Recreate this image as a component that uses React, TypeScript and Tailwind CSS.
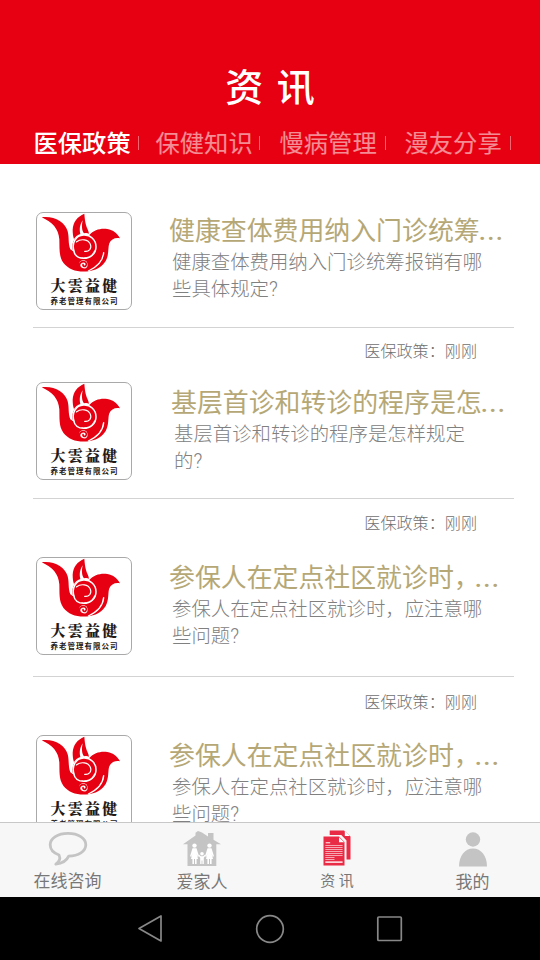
const tabs = [
  { label: "医保政策", cls: "w-[105px] font-medium text-white" },
  { label: "保健知识", cls: "ml-[17px] w-[104px] text-white/55" },
  { label: "慢病管理", cls: "ml-[20px] w-[106px] text-white/55" },
  { label: "漫友分享", cls: "ml-[19px] w-[106px] text-white/55" },
];

const items = [
  {
    title: "健康查体费用纳入门诊统筹",
    lines: ["健康查体费用纳入门诊统筹报销有哪", "些具体规定?"],
    row: "h-[115px]",
    text: "ml-[38px] pt-[2px]",
    foot: "h-[55px] pt-[12px]",
    dots: "-ml-px",
  },
  {
    title: "基层首诊和转诊的程序是怎",
    lines: ["基层首诊和转诊的程序是怎样规定", "的?"],
    row: "h-[116px]",
    text: "ml-[40px] pt-[4px]",
    foot: "h-[59px] pt-[13px]",
    dots: "-ml-px",
  },
  {
    title: "参保人在定点社区就诊时，",
    lines: ["参保人在定点社区就诊时，应注意哪", "些问题?"],
    row: "h-[119px]",
    text: "ml-[38px] pt-[4px]",
    foot: "h-[59px] pt-[14px]",
    dots: "-ml-[5px]",
  },
  {
    title: "参保人在定点社区就诊时，",
    lines: ["参保人在定点社区就诊时，应注意哪", "些问题?"],
    row: "h-[119px]",
    text: "ml-[38px] pt-[4px]",
    foot: "h-[59px] pt-[14px]",
    dots: "-ml-[5px]",
  },
];

function Logo() {
  return (
    <div className="flex h-[98px] w-24 shrink-0 flex-col items-center rounded-[7px] border border-[#a9a9a9] bg-white">
      <svg viewBox="-9 3 282 180" className="h-[60px] w-[94px] shrink-0">
        <g fill="#e60012">
          <path d="M5 16C42 11 75 30 83 58C88 78 84 94 91 112L130 140L165 150L148 177C120 183 86 174 70 152C56 133 59 108 58 82C56 50 37 31 5 16Z" />
          <path d="M133 5C112 14 99 30 98 53C98 64 99 72 102 81C107 73 114 69 121 66C118 51 119 40 128 25C124 44 126 56 132 64C138 62 143 63 147 65C146 56 140 48 138 39C135 27 134 17 133 5Z" />
          <path d="M147 70C162 53 183 48 202 51C220 54 232 64 240 79C225 76 213 82 208 94C203 107 208 128 197 147C187 164 165 177 142 178L118 150L165 120Z" />
          <circle cx="131" cy="103" r="34" />
        </g>
        <g fill="none" stroke="#fff" strokeLinecap="round">
          <path d="M103 120C93 94 107 70 131 69C152 68 168 84 168 104C168 125 151 139 131 139C115 139 104 130 101 116" strokeWidth="4.5" />
          <path d="M109 90C123 79 145 82 151 97C156 110 147 120 134 118" strokeWidth="3.5" />
          <path d="M191 122C189 146 171 165 145 177" strokeWidth="4" />
        </g>
        <circle cx="130" cy="158" r="13" fill="#fff" />
        <path d="M146 170C139 174 127 173 121 167C115 159 120 149 130 149C138 149 142 157 137 162C133 165 128 162 129 158" fill="none" stroke="#e60012" strokeWidth="5" strokeLinecap="round" />
      </svg>
      <div className="mt-[3px] h-[21px] whitespace-nowrap pl-[2px] font-['Liberation_Serif','Noto_Serif_CJK_SC','Noto_Sans_CJK_SC',serif] text-[15px] font-black leading-[20px] tracking-[2.2px] text-[#231815]">大雲益健</div>
      <div className="whitespace-nowrap pl-px text-[7.5px] font-bold leading-[9px] tracking-[1px] text-[#231815]">养老管理有限公司</div>
    </div>
  );
}

function ChatIcon() {
  return (
    <svg viewBox="0 0 40 36" className="h-9 w-10">
      <path d="M20 2.4C9.8 2.4 2.2 7.2 2.2 13.8C2.2 18.4 5.4 22 11 24C12.7 27.6 11 31 7.8 33.2C13.5 32.6 18.5 30 20.7 25.2C30.5 25 37.8 20.4 37.8 13.8C37.8 7.2 30.2 2.4 20 2.4Z" fill="none" stroke="#c4c4c4" strokeWidth="2.8" strokeLinejoin="round" />
    </svg>
  );
}

function FamilyIcon() {
  return (
    <svg viewBox="0 0 40 36" className="h-9 w-10">
      <path d="M16 0L20 1.6L26 5.6V2H31.5V8.7L39 13.3H34.3V35H5.5V13.3H1L13.5 4.5V1.8Z" fill="#c4c4c4" />
      <g fill="#fff">
        <circle cx="12.5" cy="14.6" r="2.2" />
        <path d="M10.5 17.2H14.5L17 25.2L15.7 25.7L14.5 22L16 28H14.6V33H13V28H12V33H10.4V28H9L10.5 22L9.3 25.7L8 25.2Z" />
        <circle cx="27.5" cy="14.6" r="2.2" />
        <path d="M25.5 17.2H29.5L32 25.2L30.7 25.7L29.5 22L31 28H29.6V33H28V28H27V33H25.4V28H24L25.5 22L24.3 25.7L23 25.2Z" />
        <circle cx="20" cy="22.7" r="1.8" />
        <path d="M16.8 23.4L18.9 25.2H21.1L23.2 23.4L23.7 24.4L21.8 26.7V33H20.4V29.5H19.6V33H18.2V26.7L16.3 24.4Z" />
      </g>
    </svg>
  );
}

function NewsIcon() {
  return (
    <svg viewBox="0 0 28 36" className="h-9 w-7">
      <path d="M6.7 .5H21L27.5 6.5V29.5H23.5V10.5L18.3 5H6.7Z" fill="#ea2b45" />
      <path d="M21.8 1V6H26.8Z" fill="#fff" />
      <path d="M.5 6.5H16L21.5 12V35.5H.5Z" fill="#ea2b45" />
      <path d="M16 7.2V12.3H21.2Z" fill="#fff" />
      <path d="M2.7 12.8H7.2" stroke="#fff" strokeWidth="1" />
      <path d="M2.3 15.5H19.6M2.3 17.5H19.6M2.3 19.5H19.6M2.3 21.5H19.6M2.3 23.5H19.6M2.3 25.5H19.6M2.3 27.5H11.5M2.3 29.5H11.5M2.3 31.5H19.6" stroke="#f7a5b0" strokeWidth="1.1" />
      <path d="M2.3 32.5H19.6" stroke="#fff" strokeWidth=".8" />
    </svg>
  );
}

function PersonIcon() {
  return (
    <svg viewBox="0 0 28 36" className="h-9 w-7" fill="#c4c4c4">
      <circle cx="14" cy="8.5" r="7.2" />
      <path d="M0 35.5C0 25 5.8 17.5 14 17.5S28 25 28 35.5Z" />
    </svg>
  );
}

export default function App() {
  return (
    <div className="flex h-[960px] w-[540px] flex-col overflow-hidden bg-white font-[Roboto,'Noto_Sans_CJK_SC',sans-serif]">
      <header className="h-[164px] shrink-0 bg-[#e60012]">
        <h1 className="pt-[62px] text-center text-[38px] font-medium leading-[52px] text-white [word-spacing:4px]">资 讯</h1>
        <nav className="mt-[13px] flex pl-[33.5px]">
          {tabs.map((t) => (
            <div key={t.label} className={`${t.cls} flex h-8 shrink-0 items-center justify-between whitespace-nowrap text-[24.3px]`}>
              <span className="pt-[2px]">{t.label}</span>
              <span className="h-[14px] w-px bg-white/40" />
            </div>
          ))}
        </nav>
      </header>

      <main className="min-h-0 flex-1 overflow-hidden pl-[33px] pr-[26px] pt-12">
        {items.map((it, i) => (
          <article key={i}>
            <div className={`${it.row} flex pl-[3px]`}>
              <Logo />
              <div className={`${it.text} whitespace-nowrap`}>
                <h2 className="-ml-px flex h-8 pt-px text-[25.9px] leading-8 text-[#b5a876]">
                  <span>{it.title}</span>
                  <span className={`${it.dots} font-medium tracking-[1.3px]`}>...</span>
                </h2>
                <p className="pl-[2px] pt-[3px] text-[19.4px] font-light leading-[27px] text-[#808080]">
                  {it.lines[0]}
                  <br />
                  {it.lines[1]}
                </p>
              </div>
            </div>
            <div className={`${it.foot} border-t border-[#d3d3d3] pr-[37px] text-right text-[16.1px] font-light leading-6 text-[#707070]`}>医保政策：刚刚</div>
          </article>
        ))}
      </main>

      <footer className="flex h-[75px] shrink-0 border-t border-[#c8c8c8] bg-[#f7f7f7] text-[17px] leading-6 text-[#777]">
        <div className="flex w-[135px] flex-col items-center pt-[8px]">
          <ChatIcon />
          <span className="mt-[2px]">在线咨询</span>
        </div>
        <div className="flex w-[134px] flex-col items-center pt-[8px]">
          <FamilyIcon />
          <span className="mt-[3px]">爱家人</span>
        </div>
        <div className="flex w-[136px] flex-col items-center pt-[7px]">
          <NewsIcon />
          <span className="mt-[3px] text-[15px]">资 讯</span>
        </div>
        <div className="flex w-[135px] flex-col items-center pt-[8px]">
          <PersonIcon />
          <span className="mt-[3px]">我的</span>
        </div>
      </footer>

      <div className="flex h-[63px] shrink-0 items-start justify-center bg-black pt-4">
        <svg viewBox="0 0 270 32" className="h-8 w-[270px]" fill="none" stroke="#888" strokeWidth="1.7" strokeLinejoin="round">
          <path d="M4 15.5L26 3V28Z" />
          <circle cx="135" cy="16" r="13.3" />
          <rect x="242.8" y="4" width="23.5" height="23.5" rx="1" />
        </svg>
      </div>
    </div>
  );
}
